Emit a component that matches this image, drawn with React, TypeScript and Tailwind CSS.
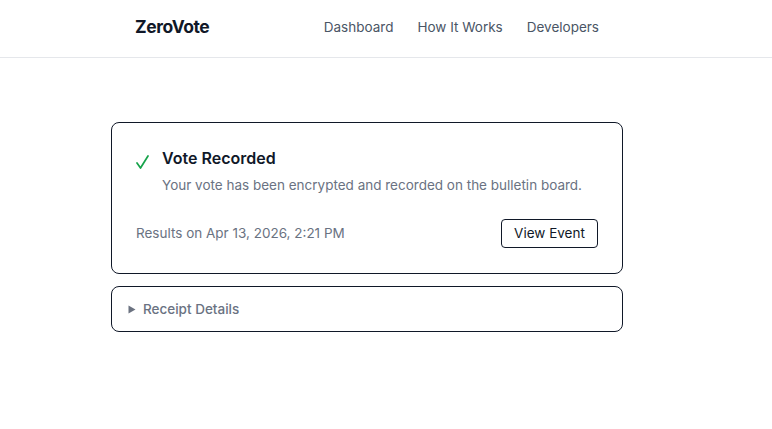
import React from "react";

export default function App() {
  return (
    <div className="min-h-[429px] bg-white text-gray-900" style={{ fontFamily: "Inter, 'Noto Sans', sans-serif" }}>
      <header className="border-b border-gray-200">
        <div className="ml-[111px] flex h-[57px] w-[512px] items-center justify-between px-6 pb-[3px]">
          <span className="text-[17.5px] font-bold tracking-tight text-gray-900">ZeroVote</span>
          <nav className="flex items-center gap-6 text-[13.5px] text-gray-600">
            <a>Dashboard</a>
            <a>How It Works</a>
            <a>Developers</a>
          </nav>
        </div>
      </header>
      <main className="ml-[111px] flex w-[512px] flex-col gap-3 pt-[64px]">
        <div className="rounded-lg border border-gray-900 px-6 pb-[25px] pt-[23px]">
          <div className="flex">
            <svg width="13" height="14" viewBox="0 0 13 14" className="mr-[13px] mt-[9px] shrink-0" fill="none">
              <path d="M1 8 L4.5 13 L12 1" stroke="#16a34a" strokeWidth="1.7" strokeLinecap="round" strokeLinejoin="round" />
            </svg>
            <div>
              <h2 className="text-base font-semibold leading-6">Vote Recorded</h2>
              <p className="mt-[5px] text-[13.5px] leading-5 text-gray-500">
                Your vote has been encrypted and recorded on the bulletin board.
              </p>
            </div>
          </div>
          <div className="mt-[24px] flex items-center justify-between">
            <span className="text-[13.5px] text-gray-500">Results on Apr 13, 2026, 2:21 PM</span>
            <button className="h-[29px] w-[97px] rounded border border-gray-900 text-[13.5px] text-gray-900">View Event</button>
          </div>
        </div>
        <div className="flex h-[46px] items-center rounded-lg border border-gray-900 px-4 text-[13.5px] text-gray-500">
          <svg width="8" height="9" viewBox="0 0 8 9" className="mr-[7px] shrink-0">
            <path d="M0.5 0.5 L7.5 4.5 L0.5 8.5 Z" fill="#6b7280" />
          </svg>
          <span className="font-medium">Receipt Details</span>
        </div>
      </main>
    </div>
  );
}
